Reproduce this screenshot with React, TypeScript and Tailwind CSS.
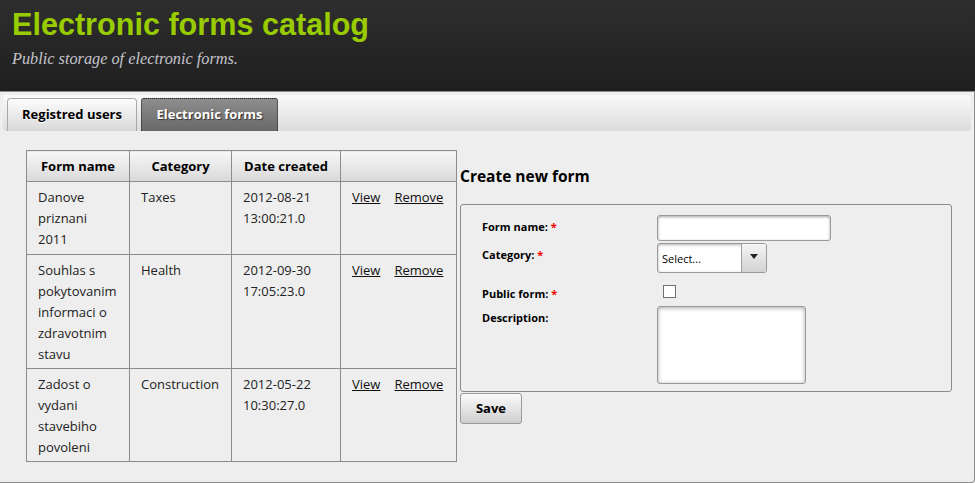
export default function App() {
  const rows = [
    { name: ["Danove", "priznani", "2011"], cat: "Taxes", date: ["2012-08-21", "13:00:21.0"], pb: "pb-[4px]" },
    {
      name: ["Souhlas s", "pokytovanim", "informaci o", "zdravotnim", "stavu"],
      cat: "Health",
      date: ["2012-09-30", "17:05:23.0"],
      pb: "pb-[3px]",
    },
    {
      name: ["Zadost o", "vydani", "stavebiho", "povoleni"],
      cat: "Construction",
      date: ["2012-05-22", "10:30:27.0"],
      pb: "pb-[3px]",
    },
  ];
  return (
    <div className="w-[975px] h-[483px] overflow-hidden bg-[#eeeeee] font-['Open_Sans',sans-serif] text-[#222]">
      <header className="h-[91px] bg-gradient-to-b from-[#2e2e2e] to-[#1f1f1f] px-[12px] pt-[7px]">
        <h1 className="font-['Liberation_Sans',Arial,sans-serif] font-bold text-[30.6px] leading-[34px] text-[#99cc00]">
          Electronic forms catalog
        </h1>
        <p className="mt-[9px] font-['Liberation_Serif',serif] italic text-[16.3px] leading-[18px] text-[#c4c4cc]">
          Public storage of electronic forms.
        </p>
      </header>
      <div className="h-[392px] border-t border-r border-b border-[#8c8c8c] rounded-br-[4px] p-[3px] bg-[#eeeeee]">
        <div className="h-[36px] rounded-[4px] bg-gradient-to-b from-[#fafafa] to-[#dcdcdc] pl-[4px] pt-[3px] flex gap-[4px]">
          <div className="w-[130px] h-[33px] flex items-center justify-center rounded-t-[4px] border border-b-0 border-[#a8a8a8] bg-gradient-to-b from-[#fdfdfd] to-[#d8d8d8] text-[13px] font-bold text-black [text-shadow:0_1px_0_#fff]">
            Registred users
          </div>
          <div className="w-[137px] h-[33px] flex items-center justify-center rounded-t-[3px] border border-b-0 border-dotted border-[#222] bg-gradient-to-b from-[#8e8e8e] to-[#686868] text-[13px] font-bold text-white [text-shadow:1px_1px_1px_#333]">
            Electronic forms
          </div>
        </div>
        <div className="flex items-start pt-[19px] pl-[23px]">
          <table className="table-fixed border-collapse w-[430px] text-[13px] leading-[21px]">
            <colgroup>
              <col className="w-[103px]" />
              <col className="w-[102px]" />
              <col className="w-[109px]" />
              <col className="w-[116px]" />
            </colgroup>
            <thead>
              <tr>
                {["Form name", "Category", "Date created", ""].map((h, i) => (
                  <th
                    key={i}
                    className="border border-[#8c8c8c] bg-gradient-to-b from-[#f7f7f7] to-[#d9d9d9] font-bold text-black text-center pt-[5px] pb-[4px] px-[4px]"
                  >
                    {h || "\u00a0"}
                  </th>
                ))}
              </tr>
            </thead>
            <tbody>
              {rows.map((r, i) => (
                <tr key={i}>
                  <td className={`border border-[#8c8c8c] align-top pl-[11px] pr-[4px] pt-[5px] ${r.pb}`}>
                    {r.name.map((n, j) => (
                      <div key={j}>{n}</div>
                    ))}
                  </td>
                  <td className={`border border-[#8c8c8c] align-top pl-[11px] pr-[4px] pt-[5px] ${r.pb}`}>{r.cat}</td>
                  <td className={`border border-[#8c8c8c] align-top pl-[11px] pr-[4px] pt-[5px] ${r.pb}`}>
                    {r.date.map((d, j) => (
                      <div key={j}>{d}</div>
                    ))}
                  </td>
                  <td className={`border border-[#8c8c8c] align-top pl-[11px] pr-[4px] pt-[5px] ${r.pb}`}>
                    <div className="flex gap-[14px] text-[#111]">
                      <span className="underline">View</span>
                      <span className="underline">Remove</span>
                    </div>
                  </td>
                </tr>
              ))}
            </tbody>
          </table>
          <div className="ml-[3px] flex flex-col items-start">
            <h3 className="mt-[16px] text-[15.5px] leading-[21px] font-bold text-black">Create new form</h3>
            <div className="mt-[17px] w-[492px] h-[188px] border border-[#8c8c8c] rounded-[3px] pl-[21px] pt-[10px] text-[11px] leading-[15px]">
              <div className="flex h-[26px]">
                <div className="w-[175px] pt-[4px] font-bold text-black">
                  Form name: <span className="text-[#e00]">*</span>
                </div>
                <div className="w-[174px] h-[26px] bg-white border border-[#9a9a9a] rounded-[3px] shadow-[inset_0_1px_3px_rgba(0,0,0,0.35)]" />
              </div>
              <div className="flex h-[30px] mt-[2px]">
                <div className="w-[175px] pt-[4px] font-bold text-black">
                  Category: <span className="text-[#e00]">*</span>
                </div>
                <div className="w-[110px] h-[30px] flex bg-white border border-[#9a9a9a] rounded-[3px] overflow-hidden shadow-[inset_0_1px_3px_rgba(0,0,0,0.3)]">
                  <div className="flex-1 flex items-center pl-[4px] text-[11px] text-black">Select...</div>
                  <div className="w-[25px] h-full border-l border-[#a0a0a0] bg-gradient-to-b from-[#f5f5f5] to-[#d2d2d2] flex items-center justify-center pb-[4px]">
                    <svg width="8" height="5" viewBox="0 0 8 5">
                      <path d="M0 0 L8 0 L4 5 Z" fill="#222" />
                    </svg>
                  </div>
                </div>
              </div>
              <div className="flex h-[22px] mt-[8px]">
                <div className="w-[175px] pt-[5px] font-bold text-black">
                  Public form: <span className="text-[#e00]">*</span>
                </div>
                <div className="mt-[4px] ml-[6px] w-[13px] h-[13px] bg-white border border-[#707070]" />
              </div>
              <div className="flex mt-[3px]">
                <div className="w-[175px] pt-[4px] font-bold text-black">Description:</div>
                <div className="w-[149px] h-[78px] bg-white border border-[#9a9a9a] rounded-[3px] shadow-[inset_0_1px_4px_rgba(0,0,0,0.35)]" />
              </div>
            </div>
            <button className="mt-[1px] w-[62px] h-[31px] border border-[#9a9a9a] rounded-[3px] bg-gradient-to-b from-[#fafafa] to-[#cfcfcf] text-[13px] font-bold text-black">
              Save
            </button>
          </div>
        </div>
      </div>
    </div>
  );
}
